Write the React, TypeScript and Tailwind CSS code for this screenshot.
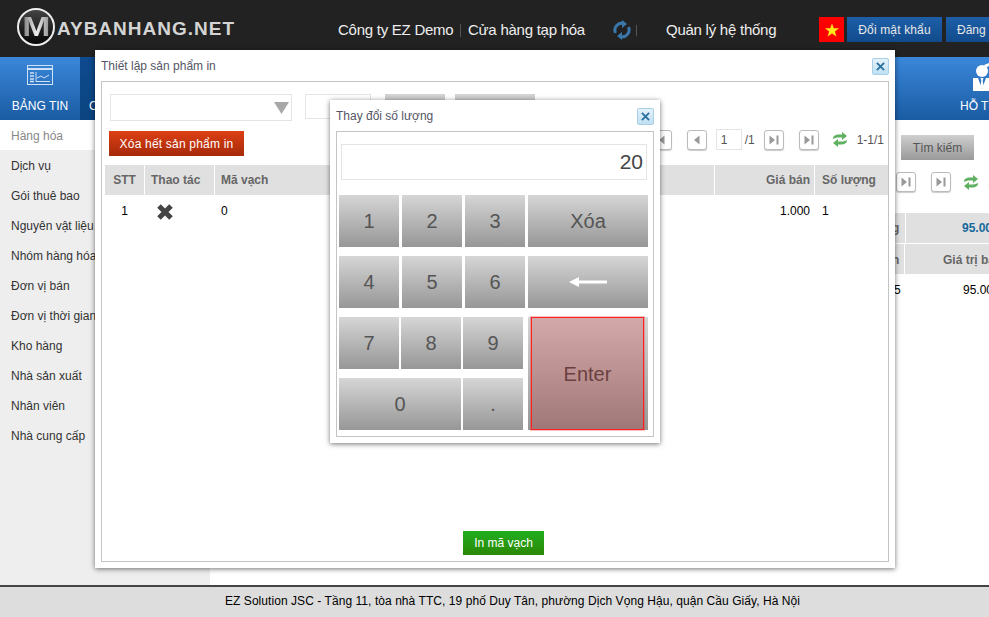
const sideItems = [
  "Dịch vụ",
  "Gói thuê bao",
  "Nguyên vật liệu",
  "Nhóm hàng hóa",
  "Đơn vị bán",
  "Đơn vị thời gian",
  "Kho hàng",
  "Nhà sản xuất",
  "Nhân viên",
  "Nhà cung cấp",
];

function CloseButton() {
  return (
    <button className="w-[17px] h-[17px] rounded-[2px] border border-[#a8cfe6] bg-gradient-to-b from-[#e4f2fa] to-[#bfe0f3] flex items-center justify-center">
      <svg className="w-[9px] h-[9px]" viewBox="0 0 10 10" fill="none" stroke="#2a6f9e" strokeWidth={2}>
        <path d="M1 1l8 8M9 1l-8 8" />
      </svg>
    </button>
  );
}

// prev = single arrow, otherwise arrow + bar
function PagerButton({ prev = false }: { prev?: boolean }) {
  return (
    <button className="w-5 h-5 shrink-0 rounded-[3px] border border-[#bbb] bg-white flex items-center justify-center shadow-[0_1px_1px_#ccc]">
      <svg className="w-3 h-3" viewBox="0 0 12 12" fill="#999">
        {prev ? <path d="M8.500 1.500v9L3 6z" /> : <path d="M1.500 1.500v9L7 6zM8.500 1.500h2v9h-2z" />}
      </svg>
    </button>
  );
}

function RefreshIcon() {
  return (
    <svg className="w-4 h-[15px] shrink-0" viewBox="0 0 16 15" fill="#5fb060">
      <path d="M1 7C1 3.500 4 2.500 7 2.500H10V0l5 4-5 4V5.500H7C5 5.500 3.500 5.800 1 7z" />
      <path d="M15 8c0 3.500-3 4.500-6 4.500H6V15l-5-4 5-4v2.500h3c2 0 3.500-.3 6-1.500z" />
    </svg>
  );
}

function Key({ label, className = "" }: { label: React.ReactNode; className?: string }) {
  return (
    <button className={`h-[52px] bg-gradient-to-b from-[#d6d6d6] to-[#979797] text-[20px] text-[#555] flex items-center justify-center ${className}`}>
      {label}
    </button>
  );
}

function QuantityModal() {
  return (
    <div className="absolute left-[330px] top-[100px] w-[330px] h-[343px] bg-white shadow-[0_1px_5px_rgba(0,0,0,0.55)] px-[6px] pb-[6px] flex flex-col">
      <div className="h-[31px] shrink-0 flex items-center justify-between pt-[1px] text-[12px] text-[#555566]">
        <span>Thay đổi số lượng</span>
        <CloseButton />
      </div>
      <div className="flex-1 border border-[#c4c4c4] px-[2px] pt-[12px]">
        <div className="mx-[2px] w-[306px] h-[36px] border border-[#e4e4e4] flex items-center justify-end pr-[3px] text-[21px] text-[#444]">
          20
        </div>
        <div className="mt-[15px] flex flex-col gap-[9px]">
          <div className="flex gap-[3px]">
            <Key label="1" className="w-[60px]" />
            <Key label="2" className="w-[60px]" />
            <Key label="3" className="w-[60px]" />
            <Key label="Xóa" className="w-[120px]" />
          </div>
          <div className="flex gap-[3px]">
            <Key label="4" className="w-[60px]" />
            <Key label="5" className="w-[60px]" />
            <Key label="6" className="w-[60px]" />
            <Key
              className="w-[120px]"
              label={
                <svg className="w-[38px] h-3" viewBox="0 0 38 12" fill="#fff">
                  <path d="M0 6l10-5v3.500h28v3H10V11z" />
                </svg>
              }
            />
          </div>
          <div className="flex gap-[5px]">
            <div className="w-[184px] flex flex-col gap-[9px]">
              <div className="flex gap-[2px]">
                <Key label="7" className="w-[60px]" />
                <Key label="8" className="w-[60px]" />
                <Key label="9" className="w-[60px]" />
              </div>
              <div className="flex gap-[2px]">
                <Key label="0" className="w-[122px]" />
                <Key label="." className="w-[60px]" />
              </div>
            </div>
            <div className="w-[120px] h-[113px] bg-gradient-to-b from-[#d6d6d6] to-[#979797] pl-[3px] pr-[4px]">
              <button className="w-full h-full bg-[linear-gradient(#d4a9a9,#a07777)] shadow-[inset_0_0_0_1px_#f22] outline outline-[rgba(255,0,0,0.25)] text-[20px] text-[#6b3f3f] pt-[1px]">
                Enter
              </button>
            </div>
          </div>
        </div>
      </div>
    </div>
  );
}

function PrintModal() {
  return (
    <div className="absolute left-[95px] top-[50px] w-[800px] h-[518px] bg-white shadow-[0_1px_5px_rgba(0,0,0,0.55)] px-[6px] pb-[6px] flex flex-col">
      <div className="h-[31px] shrink-0 flex items-center justify-between pt-[1px] text-[12px] text-[#555566]">
        <span>Thiết lập sản phẩm in</span>
        <CloseButton />
      </div>
      <div className="flex-1 border border-[#c4c4c4] flex flex-col pl-[3px]">
        <div className="flex items-start pt-[12px] pl-[5px]">
          <div className="w-[182px] h-[27px] border border-[#e4e4e4] flex items-center justify-end pr-[2px]">
            <svg className="w-[15px] h-3" viewBox="0 0 15 12" fill="#a8a8a8">
              <path d="M0 0h15L7.500 12z" />
            </svg>
          </div>
          <div className="ml-[13px] w-[66px] h-[25px] border border-[#e4e4e4]" />
          <div className="ml-[14px] w-[60px] h-[25px] bg-gradient-to-b from-[#d6d6d6] to-[#979797]" />
          <div className="ml-[10px] w-[80px] h-[25px] bg-gradient-to-b from-[#d6d6d6] to-[#979797]" />
        </div>

        <div className="mt-[10px] h-[25px] flex items-start">
          <button className="ml-[4px] w-[135px] h-[25px] bg-gradient-to-b from-[#dd3f13] to-[#a62a0a] text-[12px] tracking-[0.2px] text-white">
            Xóa hết sản phẩm in
          </button>
          <div className="ml-auto mr-[4px] -mt-[2px] flex items-center text-[12px] text-[#555]">
            <PagerButton prev />
            <div className="ml-[15px]">
              <PagerButton prev />
            </div>
            <div className="ml-[9px] w-[26px] h-[21px] border border-[#e4e4e4] pl-[4px] flex items-center">1</div>
            <span className="ml-[3px]">/1</span>
            <div className="ml-[9px]">
              <PagerButton />
            </div>
            <div className="ml-[15px]">
              <PagerButton />
            </div>
            <div className="ml-[13px]">
              <RefreshIcon />
            </div>
            <span className="ml-[9px]">1-1/1</span>
          </div>
        </div>

        <div className="mt-[9px] flex h-[30px] gap-[1px] text-[12px] font-bold text-[#666] shrink-0">
          <div className="w-[39px] bg-[#e0e0e0] flex items-center justify-center">STT</div>
          <div className="w-[69px] bg-[#e0e0e0] flex items-center pl-[6px]">Thao tác</div>
          <div className="w-[499px] bg-[#e0e0e0] flex items-center pl-[6px]">Mã vạch</div>
          <div className="w-[99px] bg-[#e0e0e0] flex items-center justify-end pr-[4px]">Giá bán</div>
          <div className="flex-1 bg-[#e0e0e0] flex items-center pl-[7px]">Số lượng</div>
        </div>
        <div className="flex h-[30px] gap-[1px] text-[12px] text-black pt-[2px]">
          <div className="w-[39px] flex items-center justify-center">1</div>
          <div className="w-[69px] flex items-center pl-[12px]">
            <svg className="w-4 h-4 mt-[1px]" viewBox="0 0 16 16" fill="none" stroke="#444" strokeWidth={5}>
              <path d="M2 2l12 12M14 2L2 14" />
            </svg>
          </div>
          <div className="w-[499px] flex items-center pl-[6px]">0</div>
          <div className="w-[99px] flex items-center justify-end pr-[4px]">1.000</div>
          <div className="flex-1 flex items-center pl-[7px]">1</div>
        </div>

        <div className="mt-auto pb-[6px] pl-[14px] flex justify-center">
          <button className="w-[81px] h-[24px] bg-gradient-to-b from-[#1fae1f] to-[#2b8805] text-[12px] text-white">
            In mã vạch
          </button>
        </div>
      </div>
    </div>
  );
}

export default function App() {
  return (
    <div className="relative w-[989px] h-[617px] overflow-hidden bg-white flex flex-col font-['Liberation_Sans',Arial,sans-serif]">
      {/* Header */}
      <header className="h-[57px] shrink-0 bg-[#222] flex items-start text-white">
        <div className="w-[338px] shrink-0 flex items-start">
          <div className="ml-[17px] mt-[8px] w-[38px] h-[38px] rounded-full border-2 border-[#eee] bg-gradient-to-b from-[#444] to-[#080808] flex items-center justify-center shrink-0">
            <span className="text-[27px] leading-none font-bold scale-x-[1.25] bg-gradient-to-r from-[#777] via-[#eee] to-[#888] bg-clip-text text-transparent">M</span>
          </div>
          <span className="mt-[17px] ml-[2px] text-[19px] leading-[23px] font-bold tracking-[1px] text-[#d4d4d4] whitespace-nowrap">AYBANHANG.NET</span>
        </div>
        <div className="mt-[20px] flex items-center text-[15px] leading-[20px] text-[#eee] whitespace-nowrap tracking-[-0.25px]">
          <span className="w-[116px]">Công ty EZ Demo</span>
          <span className="ml-[6px] w-[1px] h-[13px] bg-[#555]" />
          <span className="ml-[7px] w-[117px]">Cửa hàng tạp hóa</span>
          <svg className="ml-[28px] w-[18px] h-[20px]" viewBox="0 0 18 20" fill="none" stroke="#3a77ab" strokeWidth={3}>
            <path d="M2.500 13A7 7 0 0 1 11 3.500" />
            <path d="M15.500 7A7 7 0 0 1 7 16.500" />
            <path d="M9 0l5 4-5 4z" fill="#3a77ab" stroke="none" />
            <path d="M9 12l-5 4 5 4z" fill="#3a77ab" stroke="none" />
          </svg>
          <span className="ml-[5px] w-[1px] h-[11px] bg-[#555]" />
          <span className="ml-[29px] w-[110px]">Quản lý hệ thống</span>
        </div>
        <div className="ml-[43px] mt-[17px] w-[25px] h-[25px] shrink-0 bg-[#f00] flex items-center justify-center">
          <svg className="w-[14px] h-[14px]" viewBox="0 0 24 24" fill="#ffe81a">
            <path d="M12 1l3 8h9l-7 5.500 2.600 8.500L12 18l-7.600 5L7 14.500 0 9h9z" />
          </svg>
        </div>
        <button className="ml-[3px] mt-[17px] w-[95px] h-[25px] shrink-0 bg-gradient-to-b from-[#1d5fa8] to-[#114b8c] text-[12px] tracking-[0.15px] text-[#e8e8e8]">
          Đổi mật khẩu
        </button>
        <button className="ml-[4px] mt-[17px] w-[80px] h-[25px] shrink-0 bg-gradient-to-b from-[#1d5fa8] to-[#114b8c] text-[12px] text-[#e8e8e8] text-left pl-[11px] whitespace-nowrap">
          Đăng xuất
        </button>
      </header>

      {/* Main nav */}
      <nav className="h-[63px] shrink-0 flex text-[12px] text-white">
        <div className="w-[80px] bg-gradient-to-b from-[#3a87da] to-[#1a5ca3] flex flex-col items-center">
          <svg className="mt-[8px] w-[26px] h-[20px]" viewBox="0 0 26 20" fill="none" stroke="#cfe2f5" strokeWidth={1}>
            <rect x="0.500" y="0.500" width="25" height="19" />
            <path d="M1 4h24" strokeWidth={2} />
            <path d="M3 8h4M3 11h4M3 14h4M3 16.500h4" strokeWidth={1.500} />
            <path d="M9 7v9.500h14M10 13l4-2 3 2 5-3" />
          </svg>
          <span className="mt-[12px] whitespace-nowrap">BẢNG TIN</span>
        </div>
        <div className="flex-1 bg-gradient-to-b from-[#0d4a8e] to-[#0b4480] pl-[9px] pt-[40px]">CÀI ĐẶT</div>
        <div className="w-[94px] bg-gradient-to-b from-[#3a87da] to-[#1a5ca3] overflow-hidden relative pl-[65px] pt-[40px] whitespace-nowrap">
          HỖ TRỢ
          <svg className="absolute left-[74px] top-[6px] w-[26px] h-[30px]" viewBox="0 0 26 30" fill="#fff">
            <circle cx="13" cy="8" r="6" />
            <path d="M15 2l5-2 1 2-4 3z" />
            <path d="M4 15h5l4 11 4-11h5v13H4z" />
            <path d="M11.500 15h3l-.8 3 1 5-1.700 3-1.700-3 1-5z" />
          </svg>
        </div>
      </nav>

      {/* Body */}
      <div className="flex-1 min-h-0 flex">
        <aside className="w-[210px] bg-[#eee] text-[12px] text-[#333] shrink-0">
          <div className="h-[30px] bg-white text-[#888] flex items-center pl-[11px] pt-[2px]">Hàng hóa</div>
          {sideItems.map((item) => (
            <div key={item} className="h-[30px] flex items-center pl-[11px] pt-[2px] whitespace-nowrap">
              {item}
            </div>
          ))}
        </aside>
        <main className="flex-1 flex justify-end">
          <div className="w-[94px] overflow-hidden text-[12px]">
            <button className="ml-[6px] mt-[15px] w-[73px] h-[25px] bg-gradient-to-b from-[#cfcfcf] to-[#9a9a9a] text-[#555]">
              Tìm kiếm
            </button>
            <div className="mt-[12px] flex items-center whitespace-nowrap text-[#555]">
              <div className="ml-[1px]">
                <PagerButton />
              </div>
              <div className="ml-[15px]">
                <PagerButton />
              </div>
              <div className="ml-[12px]">
                <RefreshIcon />
              </div>
              <span className="ml-[9px]">1-1/1</span>
            </div>
            <div className="mt-[21px] flex gap-[1px] h-[30px] font-bold">
              <div className="w-[10px] shrink-0 bg-[#e0e0e0] text-[#666] flex items-center">
                <span className="-ml-[3px]">g</span>
              </div>
              <div className="flex-1 min-w-0 bg-[#e0e0e0] text-[#17699c] flex items-center pl-[56px] whitespace-nowrap">95.000</div>
            </div>
            <div className="mt-[1px] flex gap-[1px] h-[30px] font-bold">
              <div className="w-[9px] shrink-0 bg-[#e0e0e0] text-[#666] flex items-center pt-[2px]">
                <span className="-ml-[3px]">n</span>
              </div>
              <div className="flex-1 min-w-0 bg-[#e0e0e0] text-[#666] flex items-center pl-[38px] pt-[2px] whitespace-nowrap">Giá trị bán</div>
            </div>
            <div className="flex h-[30px] text-black pt-[2px]">
              <div className="w-[10px] shrink-0 flex items-center">
                <span className="-ml-[1px]">5</span>
              </div>
              <div className="flex-1 min-w-0 flex items-center pl-[58px] whitespace-nowrap">95.000</div>
            </div>
          </div>
        </main>
      </div>

      {/* Footer */}
      <footer className="h-[32px] shrink-0 border-t-2 border-[#444] bg-[#ddd] flex items-center justify-center pl-[36px] pb-[3px] text-[12px] tracking-[0.06px] text-black">
        EZ Solution JSC - Tầng 11, tòa nhà TTC, 19 phố Duy Tân, phường Dịch Vọng Hậu, quận Cầu Giấy, Hà Nội
      </footer>

      <PrintModal />
      <QuantityModal />
    </div>
  );
}
